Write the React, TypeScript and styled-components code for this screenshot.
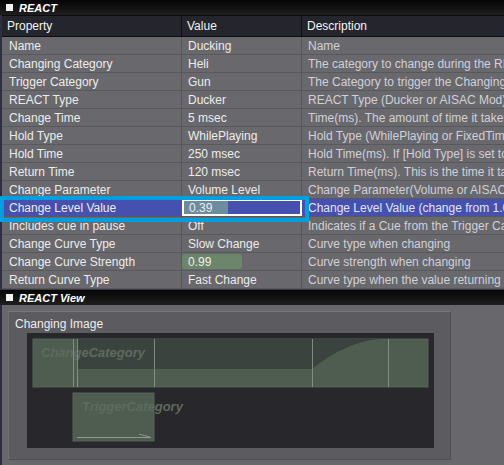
import styled, { createGlobalStyle } from 'styled-components';

const GlobalStyle = createGlobalStyle`
  body {
    margin: 0;
    background: #68676c;
    font-family: "Liberation Sans", Arial, sans-serif;
  }
`;

type Bar = { width: number; color: string; rounded?: boolean };

type Prop = {
  name: string;
  value: string;
  desc: string;
  bar?: Bar;
  selected?: boolean;
};

const props: Prop[] = [
  { name: 'Name', value: 'Ducking', desc: 'Name' },
  { name: 'Changing Category', value: 'Heli', desc: 'The category to change during the REACT operation' },
  { name: 'Trigger Category', value: 'Gun', desc: 'The Category to trigger the Changing Category' },
  { name: 'REACT Type', value: 'Ducker', desc: 'REACT Type (Ducker or AISAC Mod)' },
  { name: 'Change Time', value: '5 msec', desc: 'Time(ms). The amount of time it takes to change' },
  { name: 'Hold Type', value: 'WhilePlaying', desc: 'Hold Type (WhilePlaying or FixedTime)' },
  { name: 'Hold Time', value: '250 msec', desc: 'Hold Time(ms). If [Hold Type] is set to FixedTime' },
  { name: 'Return Time', value: '120 msec', desc: 'Return Time(ms). This is the time it takes to return' },
  { name: 'Change Parameter', value: 'Volume Level', desc: 'Change Parameter(Volume or AISAC)' },
  {
    name: 'Change Level Value',
    value: '0.39',
    desc: 'Change Level Value (change from 1.0)',
    bar: { width: 44, color: '#6d8c9f' },
    selected: true,
  },
  { name: 'Includes cue in pause', value: 'Off', desc: 'Indicates if a Cue from the Trigger Category' },
  { name: 'Change Curve Type', value: 'Slow Change', desc: 'Curve type when changing' },
  {
    name: 'Change Curve Strength',
    value: '0.99',
    desc: 'Curve strength when changing',
    bar: { width: 60, color: '#6c866b', rounded: true },
  },
  { name: 'Return Curve Type', value: 'Fast Change', desc: 'Curve type when the value returning' },
];

const TitleBar = ({ title }: { title: string }) => (
  <Title>
    <TitleBox />
    {title}
  </Title>
);

const App = () => {
  return (
    <Page>
      <GlobalStyle />
      <TitleBar title="REACT" />
      <Table>
        <HeaderRow>
          <HeadCell>Property</HeadCell>
          <HeadCell>Value</HeadCell>
          <HeadCell>Description</HeadCell>
        </HeaderRow>
        {props.map((p) => (
          <Row key={p.name} $selected={!!p.selected}>
            <Cell>{p.name}</Cell>
            <ValueCell $boxed={!!p.selected}>
              {p.bar && <ValueBar $width={p.bar.width} $color={p.bar.color} $rounded={!!p.bar.rounded} />}
              <ValueText>{p.value}</ValueText>
            </ValueCell>
            <DescCell $selected={!!p.selected}>{p.desc}</DescCell>
          </Row>
        ))}
      </Table>
      <TitleBar title="REACT View" />
      <ViewPanel>
        <GroupBox>
          <GroupLabel>Changing Image</GroupLabel>
          <Canvas>
            <svg width="407" height="115" viewBox="0 0 407 115">
              <rect x="6" y="6" width="395" height="48" fill="#4e5d4f" stroke="#56655a" />
              <path d="M50 6 H357 C330 7 308 18 285 36 H50 Z" fill="#3b433f" />
              <text
                x="14"
                y="24"
                fill="#5d6b5e"
                fontFamily="Liberation Sans, Arial, sans-serif"
                fontSize="13"
                fontWeight="bold"
                fontStyle="italic"
              >
                ChangeCategory
              </text>
              {[46, 50, 127, 285, 361].map((x) => (
                <line key={x} x1={x + 0.5} y1="6" x2={x + 0.5} y2="54" stroke="#95a095" strokeOpacity="0.75" />
              ))}
              <rect x="46" y="60" width="81" height="48" fill="#4e5d4f" stroke="#56655a" />
              <text
                x="55"
                y="78"
                fill="#5d6b5e"
                fontFamily="Liberation Sans, Arial, sans-serif"
                fontSize="13"
                fontWeight="bold"
                fontStyle="italic"
              >
                TriggerCategory
              </text>
              <path d="M50 104.5 H124 L112 101" fill="none" stroke="#8f998f" />
            </svg>
          </Canvas>
        </GroupBox>
      </ViewPanel>
    </Page>
  );
};

const Page = styled.div`
  width: 504px;
  height: 465px;
  overflow: hidden;
  display: flex;
  flex-direction: column;
  background: #68676c;
`;

const Title = styled.div`
  height: 15px;
  flex: none;
  display: flex;
  align-items: center;
  gap: 6px;
  padding-left: 6px;
  background: linear-gradient(#050505, #1f1f1f);
  color: #ffffff;
  font-size: 11px;
  font-weight: bold;
  font-style: italic;
`;

const TitleBox = styled.span`
  width: 7px;
  height: 7px;
  background: #f2f2f2;
`;

const Table = styled.div`
  display: flex;
  flex-direction: column;
  border-left: 2px solid #2e2e42;
  border-bottom: 1px solid #3a3a3e;
  font-size: 12px;
`;

const HeaderRow = styled.div`
  display: grid;
  grid-template-columns: 180px 120px 1fr;
  height: 22px;
  box-sizing: border-box;
  background: #25252d;
  border-top: 1px solid #0c0c10;
  border-bottom: 1px solid #0c0c10;
`;

const HeadCell = styled.div`
  display: flex;
  align-items: center;
  padding-left: 5px;
  color: #f4f4f4;
  border-right: 1px solid #0e0e12;
  &:last-child {
    border-right: none;
  }
`;

const Row = styled.div<{ $selected: boolean }>`
  position: relative;
  display: grid;
  grid-template-columns: 180px 120px 1fr;
  height: 18px;
  box-sizing: border-box;
  border-bottom: 1px solid #59585d;
  background: ${(p) => (p.$selected ? '#4650ae' : '#69686d')};
  ${(p) =>
    p.$selected &&
    `
    z-index: 2;
    &::after {
      content: '';
      position: absolute;
      left: -2px;
      top: -3px;
      width: 309px;
      height: 26px;
      box-sizing: border-box;
      border: 4px solid #00a0e0;
      pointer-events: none;
    }
  `}
`;

const Cell = styled.div`
  display: flex;
  align-items: center;
  padding-left: 7px;
  color: #ececec;
  white-space: nowrap;
  overflow: hidden;
  border-right: 1px solid #59585d;
`;

const ValueCell = styled.div<{ $boxed: boolean }>`
  position: relative;
  display: flex;
  align-items: center;
  padding-left: 6px;
  color: #ececec;
  white-space: nowrap;
  overflow: hidden;
  box-sizing: border-box;
  border-right: 1px solid #59585d;
  ${(p) => p.$boxed && 'border: 2px solid #ffffff; padding-left: 5px;'}
`;

const ValueBar = styled.div<{ $width: number; $color: string; $rounded: boolean }>`
  position: absolute;
  left: 0;
  top: ${(p) => (p.$rounded ? '1px' : '0')};
  bottom: ${(p) => (p.$rounded ? '1px' : '0')};
  width: ${(p) => p.$width}px;
  background: ${(p) => p.$color};
  border-radius: ${(p) => (p.$rounded ? '3px' : '0')};
`;

const ValueText = styled.span`
  position: relative;
`;

const DescCell = styled.div<{ $selected: boolean }>`
  display: flex;
  align-items: center;
  padding-left: 6px;
  color: ${(p) => (p.$selected ? '#e2e4f4' : '#d0d0d8')};
  white-space: nowrap;
  overflow: hidden;
`;

const ViewPanel = styled.div`
  flex: 1;
  border-left: 2px solid #2e2e42;
  padding: 6px 0 0 6px;
`;

const GroupBox = styled.div`
  width: 443px;
  height: 149px;
  box-sizing: border-box;
  background: #5c5b60;
  border-top: 1px solid #78777c;
  border-left: 1px solid #706f74;
  border-right: 1px solid #4f4e53;
  border-bottom: 1px solid #4f4e53;
  padding: 3px 0 0 18px;
`;

const GroupLabel = styled.div`
  height: 18px;
  margin-left: -12px;
  display: flex;
  align-items: center;
  color: #ececec;
  font-size: 12px;
`;

const Canvas = styled.div`
  width: 407px;
  height: 115px;
  background: #27272c;
  svg {
    display: block;
  }
`;

export default App;
